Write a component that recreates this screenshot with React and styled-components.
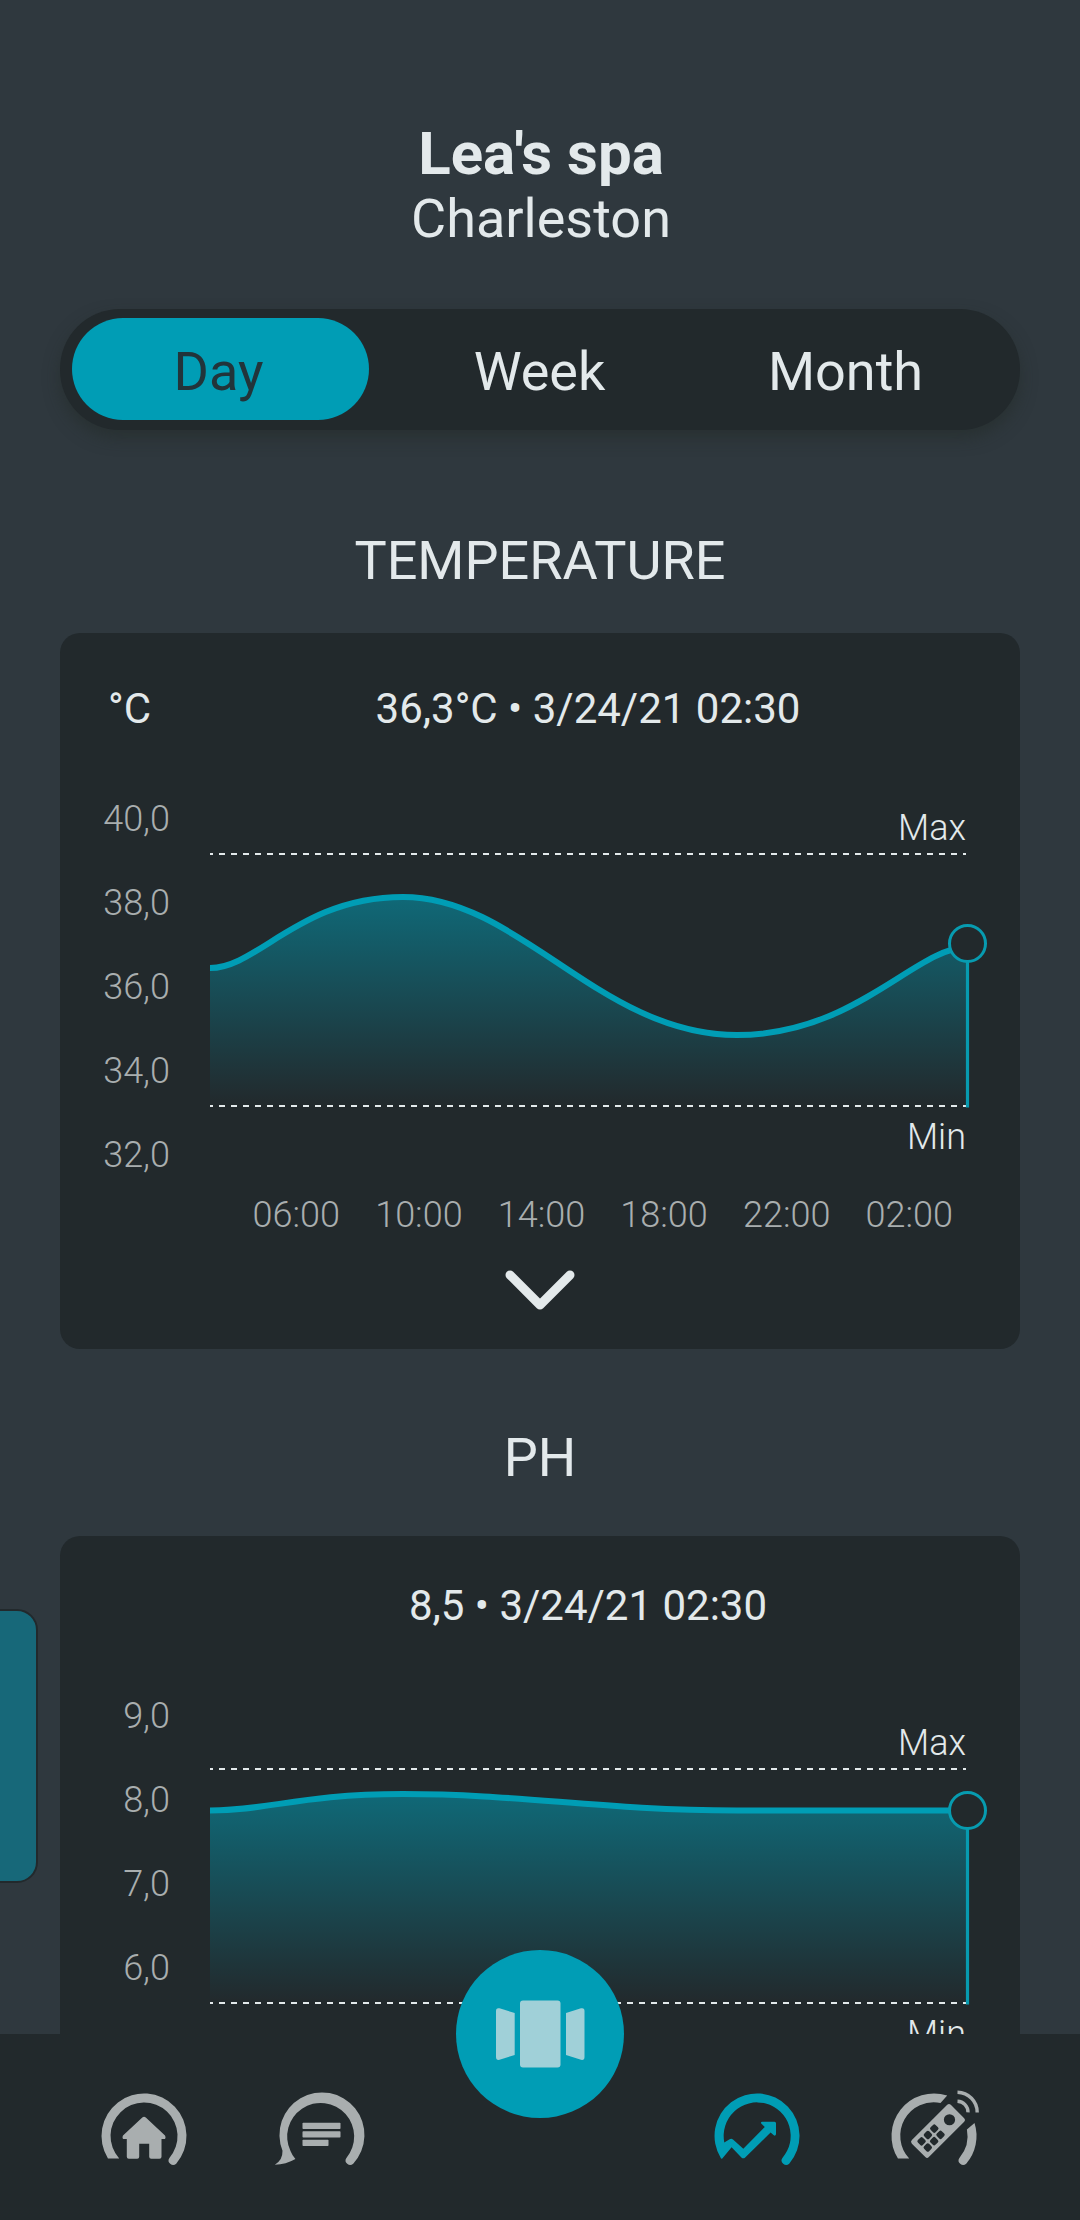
import React from 'react';
import styled, { createGlobalStyle } from 'styled-components';

const GlobalStyle = createGlobalStyle`
    * {
        box-sizing: border-box;
    }
    body {
        margin: 0;
        background: #2f383e;
        color: #e3e9eb;
        font-family: Roboto, sans-serif;
    }
`;

const tabs = ['Day', 'Week', 'Month'];

const temperature = {
    id: 'temperature',
    unit: '°C',
    value: '36,3°C • 3/24/21 02:30',
    ticks: ['40,0', '38,0', '36,0', '34,0', '32,0'],
    hours: ['06:00', '10:00', '14:00', '18:00', '22:00', '02:00'],
    line: 'M0 191 C48 191 90 120 193 120 C310 120 390 258 527 258 C645 258 705 171 757.5 170',
    peak: 120,
    max: 77,
    min: 329,
    end: 166.5,
};

const ph = {
    id: 'ph',
    value: '8,5 • 3/24/21 02:30',
    ticks: ['9,0', '8,0', '7,0', '6,0'],
    line: 'M0 136.5 C60 136.5 90 120 193 120 C312 120 392 136.5 527 136.5 L757.5 136.5',
    peak: 120,
    max: 95,
    min: 329,
    end: 136.5,
};

function Chart({ data }) {
    return (
        <Plot viewBox="0 0 756 420">
            <defs>
                <linearGradient id={`${data.id}-fill`} gradientUnits="userSpaceOnUse" x1="0" x2="0" y1={data.peak} y2={data.min}>
                    <stop offset="0" stopColor="#009db5" stopOpacity="0.55" />
                    <stop offset="1" stopColor="#009db5" stopOpacity="0" />
                </linearGradient>
            </defs>
            <path d={`${data.line} V${data.min} H0 Z`} fill={`url(#${data.id}-fill)`} />
            <Limit d={`M0 ${data.max} H756`} />
            <Limit d={`M0 ${data.min} H756`} />
            <LimitText x="756" y={data.max - 14}>Max</LimitText>
            <LimitText x="756" y={data.min + 43}>Min</LimitText>
            <path d={data.line} fill="none" stroke="#009db5" strokeWidth="6" />
            <path d={`M757.5 ${data.end} V${data.min + 1.5}`} stroke="#079bb0" strokeWidth="3.2" />
            <circle cx="757.5" cy={data.end} r="18" fill="#22292c" stroke="#079bb0" strokeWidth="3" />
        </Plot>
    );
}

function Section({ title, data }) {
    return (
        <>
            <SectionTitle>{title}</SectionTitle>
            <Card $unit={!!data.unit}>
                <CardHeader>
                    <Unit>{data.unit}</Unit>
                    <Value>{data.value}</Value>
                </CardHeader>
                <ChartRow>
                    <YAxis>
                        {data.ticks.map((tick) => <Tick key={tick}>{tick}</Tick>)}
                    </YAxis>
                    <Chart data={data} />
                </ChartRow>
                {data.hours && (
                    <XAxis>
                        {data.hours.map((hour) => <span key={hour}>{hour}</span>)}
                    </XAxis>
                )}
                <Expand>
                    <svg width="72" height="44" viewBox="0 0 72 44" fill="none">
                        <path d="M6 7 L36 37 L66 7" stroke="#e3e9eb" strokeWidth="9" strokeLinecap="round" strokeLinejoin="round" />
                    </svg>
                </Expand>
            </Card>
        </>
    );
}

// open ring shared by the navigation icons
const ring = 'M13.95 72.5 A42.5 42.5 0 1 1 82.2 77.7 A4.5 4.5 0 0 1 75.4 71.9 A33.5 33.5 0 1 0 25.2 72.5 Z';

function HomeIcon() {
    return (
        <NavIcon viewBox="0 0 100 100">
            <path d={ring} />
            <path d="M48.3 31.4 Q50 29.9 51.8 31.4 L71 49.4 Q72.6 53 69.5 53 H67.5 V70.7 Q67.5 72.7 65.5 72.7 H57.2 Q55.2 72.7 55.2 70.7 V57.7 H45.2 V70.7 Q45.2 72.7 43.2 72.7 H34.8 Q32.8 72.7 32.8 70.7 V53 H30.5 Q27.5 53 29 49.4 Z" />
        </NavIcon>
    );
}

function MessagesIcon() {
    return (
        <NavIcon viewBox="0 0 100 100">
            <path d="M11.5 64.7 A42.5 42.5 0 1 1 82.2 77.7 A4.5 4.5 0 0 1 75.4 71.9 A33.5 33.5 0 1 0 19.5 65 Q21 69 24.4 73 Q15 78.5 3.8 78.7 Q11.8 74 11.5 64.7 Z" />
            <rect x="31.5" y="36.7" width="38" height="6.2" rx="0.7" />
            <rect x="31.5" y="45.2" width="38" height="6.2" rx="0.7" />
            <rect x="31.5" y="53.7" width="26" height="6.2" rx="0.7" />
        </NavIcon>
    );
}

function StatsIcon() {
    return (
        <NavIcon viewBox="0 0 100 100" $active>
            <path d="M13.9 72.3 A42.5 42.5 0 1 1 82.2 77.7 A4.5 4.5 0 0 1 75.4 71.9 A33.5 33.5 0 1 0 17.3 56.4 L22.6 53.2 Q24.3 52 26 53.4 L36.3 62.8 L57.8 41 L54.2 37.4 Q53.5 35.7 55.3 35.7 H67.5 Q69 35.7 69 37.2 V48.3 Q68.3 50.5 66.8 49.2 L63.6 46.4 L38.2 71.5 Q36.3 73.2 34.4 71.5 L24.6 61.2 L15.5 72.2 Q14.5 73.3 13.9 72.3 Z" />
        </NavIcon>
    );
}

const keys = [0, 1, 2].flatMap((row) => [0, 1].map((col) => [row, col]));

function RemoteIcon() {
    return (
        <NavIcon viewBox="0 0 100 100">
            <path d="M13.95 72.5 A42.5 42.5 0 0 1 63.2 9.6 L56.5 16.9 A33.5 33.5 0 0 0 25.2 72.5 Z" />
            <path d="M90.5 37 A42.5 42.5 0 0 1 82.2 77.7 A4.5 4.5 0 0 1 75.4 71.9 A33.5 33.5 0 0 0 82.9 43.6 Z" />
            <g transform="translate(65 17) rotate(45)">
                <rect x="0" y="0" width="24" height="55" rx="2.5" />
                <circle cx="12.2" cy="11.5" r="5.6" fill="#22292c" />
                {keys.map(([row, col]) => (
                    <rect key={`${row}-${col}`} x={4.2 + col * 8.8} y={25 + row * 9} width="7" height="7" rx="1.8" fill="#22292c" />
                ))}
            </g>
            <path d="M73.5 6.3 A20 20 0 0 1 93.2 26.4 M73.5 15.2 A11 11 0 0 1 84 26.4" fill="none" stroke="#a9aeaf" strokeWidth="3.4" />
        </NavIcon>
    );
}

function App() {
    return (
        <Screen>
            <GlobalStyle />
            <Content>
                <SpaName>Lea's spa</SpaName>
                <Location>Charleston</Location>
                <Tabs>
                    {tabs.map((tab) => <Tab key={tab} $active={tab === 'Day'}>{tab}</Tab>)}
                </Tabs>
                <Section title="TEMPERATURE" data={temperature} />
                <Section title="PH" data={ph} />
            </Content>
            <Drawer />
            <NavBar>
                <HomeIcon />
                <MessagesIcon />
                <NavSpace />
                <StatsIcon />
                <RemoteIcon />
                <Fab>
                    <svg width="90" height="70" viewBox="0 0 90 70" fill="#a0d0d8">
                        <rect x="25" y="1.5" width="40.5" height="67" rx="3" />
                        <path d="M1 12 Q1 8.5 4.5 9.3 L19.7 14 V56 L4.5 60.8 Q1 61.5 1 58 Z" />
                        <path d="M89.5 12 Q89.5 8.5 86 9.3 L71 14 V56 L86 60.8 Q89.5 61.5 89.5 58 Z" />
                    </svg>
                </Fab>
            </NavBar>
        </Screen>
    );
}

export default App;

const Screen = styled.div`
    position: relative;
    display: flex;
    flex-direction: column;
    width: 1080px;
    height: 2220px;
    overflow: hidden;
    background: #2f383e;
`;

const Content = styled.main`
    height: 2034px;
    padding: 124px 60px 0;
    overflow: hidden;
`;

const SpaName = styled.h1`
    margin: 0;
    padding-left: 2px;
    font-size: 60px;
    font-weight: 700;
    line-height: 60px;
    text-align: center;
`;

const Location = styled.div`
    padding-left: 2px;
    font-size: 54px;
    line-height: 70px;
    text-align: center;
`;

const Tabs = styled.div`
    display: flex;
    gap: 15px;
    height: 121px;
    margin-top: 55px;
    padding: 9px 12px;
    border-radius: 60px;
    background: #22292c;
    box-shadow: 0 8px 16px rgba(34, 41, 38, 0.5);
`;

const Tab = styled.button`
    width: 297px;
    height: 102px;
    padding: 0;
    border: 0;
    border-radius: 51px;
    background: ${(props) => (props.$active ? '#009db5' : 'transparent')};
    color: ${(props) => (props.$active ? '#22343a' : '#e3e9eb')};
    font-family: inherit;
    font-size: 54px;
    line-height: 108px;
    &:nth-child(1) {
        padding-right: 4px;
    }
    &:nth-child(2) {
        margin-left: 7px;
    }
    &:nth-child(3) {
        margin-left: -6px;
    }
`;

const SectionTitle = styled.h2`
    margin: 0;
    padding-top: 95px;
    font-size: 54px;
    font-weight: 400;
    line-height: 72px;
    text-align: center;
`;

const Card = styled.section`
    height: 716px;
    margin-top: ${(props) => (props.$unit ? '36px' : '42px')};
    margin-bottom: -22px;
    padding-top: ${(props) => (props.$unit ? '51px' : '45px')};
    border-radius: 20px;
    background: #22292c;
`;

const CardHeader = styled.div`
    display: grid;
    grid-template-columns: 150px 756px;
    font-size: 42px;
    line-height: 50px;
`;

const Unit = styled.span`
    padding-left: 48px;
`;

const Value = styled.span`
    text-align: center;
`;

const ChartRow = styled.div`
    display: grid;
    grid-template-columns: 110px 756px;
    column-gap: 40px;
    margin-top: 43px;
`;

const YAxis = styled.div`
    display: flex;
    flex-direction: column;
    align-items: flex-end;
`;

const Tick = styled.span`
    color: #a9aeaf;
    font-size: 36px;
    font-weight: 300;
    line-height: 84px;
`;

const Plot = styled.svg`
    display: block;
    width: 756px;
    height: 420px;
    overflow: visible;
`;

const Limit = styled.path`
    stroke: #e3e9eb;
    stroke-width: 2;
    stroke-dasharray: 6 6;
    stroke-dashoffset: 3;
`;

const LimitText = styled.text`
    fill: #e3e9eb;
    font-size: 36px;
    font-weight: 300;
    text-anchor: end;
`;

const XAxis = styled.div`
    display: grid;
    grid-template-columns: repeat(6, 122.6px);
    padding-left: 175px;
    color: #a9aeaf;
    font-size: 36px;
    font-weight: 300;
    line-height: 36px;
    text-align: center;
`;

const Expand = styled.div`
    display: flex;
    justify-content: center;
    margin-top: 35px;
`;

const Drawer = styled.div`
    position: absolute;
    top: 1609px;
    left: -20px;
    width: 58px;
    height: 274px;
    border: 2px solid #22292c;
    border-radius: 21px;
    background: #176879;
`;

const NavBar = styled.nav`
    position: relative;
    display: flex;
    justify-content: space-between;
    height: 186px;
    padding: 52px 96.5px 0 93.5px;
    background: #22292c;
`;

const NavIcon = styled.svg`
    width: 100px;
    height: 100px;
    overflow: visible;
    fill: ${(props) => (props.$active ? '#009db5' : '#a9aeaf')};
`;

const NavSpace = styled.span`
    width: 182px;
`;

const Fab = styled.button`
    position: absolute;
    top: -84px;
    left: 456px;
    display: flex;
    align-items: center;
    justify-content: center;
    width: 168px;
    height: 168px;
    padding: 0;
    border: 0;
    border-radius: 50%;
    background: #009db5;
`;
